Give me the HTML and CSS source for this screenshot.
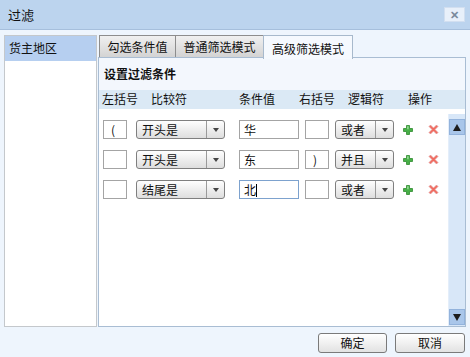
FILE: index.html
```html
<!DOCTYPE html>
<html lang="zh-CN">
<head>
<meta charset="utf-8">
<link rel="stylesheet" href="styles.css">
</head>
<body>
<div class="dialog">
  <div class="titlebar">
    <span class="title">过滤</span>
    <span class="close">✕</span>
  </div>
  <div class="main">
    <div class="left">
      <div class="left-head">货主地区</div>
    </div>
    <div class="right">
      <div class="tabs">
        <div class="tab t1">勾选条件值</div>
        <div class="tab t2">普通筛选模式</div>
        <div class="tab t3 active">高级筛选模式</div>
      </div>
      <div class="panel">
        <div class="setup">设置过滤条件</div>
        <div class="colhead">
          <span class="h h1">左括号</span>
          <span class="h h2">比较符</span>
          <span class="h h3">条件值</span>
          <span class="h h4">右括号</span>
          <span class="h h5">逻辑符</span>
          <span class="h h6">操作</span>
        </div>
        <div class="body">
          <div class="rows">
            <div class="row">
              <div class="box paren">(</div>
              <div class="sel cmp"><span class="sv">开头是</span><span class="sb"><i class="tri"></i></span></div>
              <div class="box val">华</div>
              <div class="box paren rp"></div>
              <div class="sel logic"><span class="sv">或者</span><span class="sb"><i class="tri"></i></span></div>
              <svg class="add" width="10" height="10" viewBox="0 0 10 10"><path d="M3.5 0.5h3v3h3v3h-3v3h-3v-3h-3v-3h3z" fill="#47b047" stroke="#2e8a2e" stroke-width="0.8"/><path d="M4.2 1.2h1.4v3h-1.4z" fill="#9fe09f"/></svg>
              <svg class="del" width="11" height="11" viewBox="0 0 11 11"><path d="M1 2.5l1.5-1.5 3 3 3-3 1.5 1.5-3 3 3 3-1.5 1.5-3-3-3 3-1.5-1.5 3-3z" fill="#f26a5e" stroke="#e0a0a0" stroke-width="0.7"/></svg>
            </div>
            <div class="row">
              <div class="box paren"></div>
              <div class="sel cmp"><span class="sv">开头是</span><span class="sb"><i class="tri"></i></span></div>
              <div class="box val">东</div>
              <div class="box paren rp">)</div>
              <div class="sel logic"><span class="sv">并且</span><span class="sb"><i class="tri"></i></span></div>
              <svg class="add" width="10" height="10" viewBox="0 0 10 10"><path d="M3.5 0.5h3v3h3v3h-3v3h-3v-3h-3v-3h3z" fill="#47b047" stroke="#2e8a2e" stroke-width="0.8"/><path d="M4.2 1.2h1.4v3h-1.4z" fill="#9fe09f"/></svg>
              <svg class="del" width="11" height="11" viewBox="0 0 11 11"><path d="M1 2.5l1.5-1.5 3 3 3-3 1.5 1.5-3 3 3 3-1.5 1.5-3-3-3 3-1.5-1.5 3-3z" fill="#f26a5e" stroke="#e0a0a0" stroke-width="0.7"/></svg>
            </div>
            <div class="row">
              <div class="box paren"></div>
              <div class="sel cmp"><span class="sv">结尾是</span><span class="sb"><i class="tri"></i></span></div>
              <div class="box val focus">北<span class="caret"></span></div>
              <div class="box paren rp"></div>
              <div class="sel logic"><span class="sv">或者</span><span class="sb"><i class="tri"></i></span></div>
              <svg class="add" width="10" height="10" viewBox="0 0 10 10"><path d="M3.5 0.5h3v3h3v3h-3v3h-3v-3h-3v-3h3z" fill="#47b047" stroke="#2e8a2e" stroke-width="0.8"/><path d="M4.2 1.2h1.4v3h-1.4z" fill="#9fe09f"/></svg>
              <svg class="del" width="11" height="11" viewBox="0 0 11 11"><path d="M1 2.5l1.5-1.5 3 3 3-3 1.5 1.5-3 3 3 3-1.5 1.5-3-3-3 3-1.5-1.5 3-3z" fill="#f26a5e" stroke="#e0a0a0" stroke-width="0.7"/></svg>
            </div>
          </div>
          <div class="scroll">
            <div class="sbtn"><i class="up"></i></div>
            <div class="track"></div>
            <div class="sbtn"><i class="down"></i></div>
          </div>
        </div>
      </div>
    </div>
  </div>
  <div class="footer">
    <div class="btn">确定</div>
    <div class="btn">取消</div>
  </div>
</div>
</body>
</html>
```
FILE: styles.css
```css
* { box-sizing: border-box; }
html, body { margin: 0; padding: 0; }
body {
  width: 470px; height: 357px; overflow: hidden;
  background: #eef5fd;
  font-family: "Noto Sans CJK SC", "Noto Sans", sans-serif;
  font-size: 12px; color: #111;
}
.dialog { width: 470px; height: 357px; display: flex; flex-direction: column; }
.titlebar {
  height: 30px; background: #bcd4ee; border-bottom: 1px solid #a6bfdc;
  display: flex; align-items: center; justify-content: space-between;
  padding: 0 5px 0 8px;
}
.title { font-size: 13px; color: #111; }
.close {
  width: 21px; height: 15px; background: #e8f0fa; border: 1px solid #d2dff0;
  color: #7a8a9c; font-size: 11px; font-weight: bold; line-height: 13px; text-align: center;
}
.main { display: flex; padding: 5px 4px 0 4px; height: 297px; }
.left {
  width: 93px; height: 292px; background: #fff; border: 1px solid #c4c8cc;
}
.left-head {
  height: 25px; background: #b6cff0; line-height: 24px; padding-left: 4px; font-size: 12px;
}
.right { width: 368px; margin-left: 1px; display: flex; flex-direction: column; }
.tabs { display: flex; height: 23px; padding-left: 1px; }
.tab {
  height: 23px; border: 1px solid #8d8d8d; border-bottom: none; margin-right: -1px;
  background: linear-gradient(#f0f0f0, #d2d2d2);
  text-align: center; line-height: 21px; font-size: 12px;
}
.t1 { width: 77px; }
.t2 { width: 89px; }
.t3 { width: 90px; }
.tab.active {
  background: #f5f9fe; border-color: #a7b9cc; line-height: 25px; height: 24px;
  position: relative; z-index: 1;
}
.panel {
  flex: 1; border: 1px solid #a9bdd3; background: #f3f7fd; margin-top: -1px;
  display: flex; flex-direction: column; height: 270px;
}
.setup { height: 32px; line-height: 32px; padding-left: 5px; font-weight: bold; font-size: 12px; }
.colhead {
  height: 19px; background: #dbe9f5; position: relative; line-height: 18px;
  display: flex;
}
.h { display: block; }
.h1 { margin-left: 3px; width: 49px; }
.h2 { width: 88px; }
.h3 { width: 60px; }
.h4 { width: 49px; }
.h5 { width: 60px; }
.h6 { width: 30px; }
.body { flex: 1; display: flex; background: #fff; }
.rows { flex: 1; padding-top: 11px; }
.row { display: flex; align-items: center; height: 30px; padding-bottom: 11px; }
.row { height: 30px; }
.box {
  height: 19px; border: 1px solid #a4a4a4; background: #fff;
  line-height: 17px; padding-left: 4px; font-size: 12px; position: relative;
}
.paren { width: 24px; margin-left: 4px; padding-left: 7px; }
.rp { margin-left: 6px; }
.val { width: 60px; margin-left: 14px; }
.focus { border-color: #7da2ce; }
.caret { display: inline-block; width: 1px; height: 13px; background: #000; vertical-align: -2px; margin-left: 0; }
.sel {
  height: 19px; border: 1px solid #7f7f7f; border-radius: 3px;
  background: linear-gradient(#fefefe, #dedede);
  display: flex; font-size: 12px;
}
.cmp { width: 89px; margin-left: 9px; }
.logic { width: 59px; margin-left: 6px; }
.sv { flex: 1; padding-left: 5px; line-height: 18px; border-right: 1px solid #9a9a9a; }
.sb { width: 17px; display: flex; align-items: center; justify-content: center; }
.tri { width: 0; height: 0; border-left: 3.5px solid transparent; border-right: 3.5px solid transparent; border-top: 4px solid #444; }
.add { margin-left: 9px; flex: none; }
.del { margin-left: 15px; flex: none; }
.scroll { width: 17px; margin-top: 5px; background: #d8e7f8; display: flex; flex-direction: column; border-left: 1px solid #e4eefa; }
.sbtn { height: 16px; background: #a9c6ea; border: 1px solid #93b3dc; display: flex; align-items: center; justify-content: center; margin-top: 5px; }
.sbtn:last-child { margin-top: 0; margin-bottom: 1px; }
.track { flex: 1; }
.up { width: 0; height: 0; border-left: 4px solid transparent; border-right: 4px solid transparent; border-bottom: 7px solid #1c1c1c; }
.down { width: 0; height: 0; border-left: 4px solid transparent; border-right: 4px solid transparent; border-top: 7px solid #1c1c1c; }
.footer { display: flex; justify-content: flex-end; padding: 6px 5px 0 0; gap: 8px; }
.btn {
  width: 69px; height: 20px; border: 1px solid #7a7a7a; border-radius: 3px;
  background: linear-gradient(#ffffff, #e2e2e2);
  text-align: center; line-height: 18px; font-size: 12px;
}
.btn:last-child { width: 70px; }
```
